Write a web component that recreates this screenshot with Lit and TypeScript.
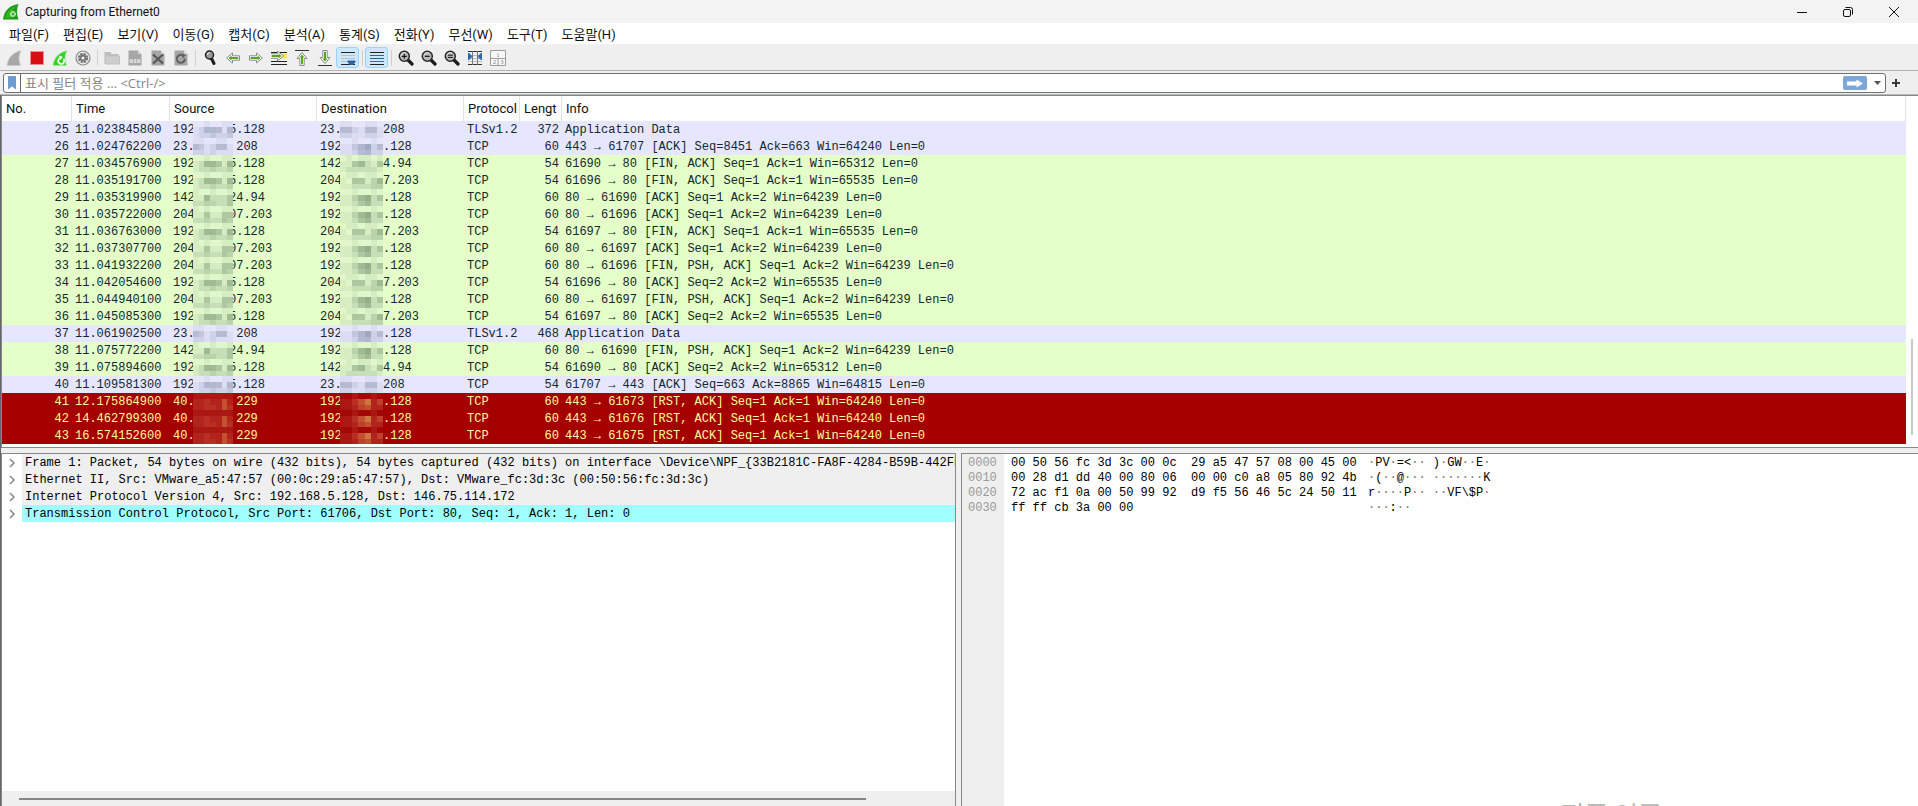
import { LitElement, html, css, svg, nothing } from "lit";
import { customElement } from "lit/decorators.js";

type Kind = "tls" | "web" | "rst";
interface Packet {
  no: number; time: string; src: [string, string]; dst: [string, string];
  proto: string; len: number; info: string; kind: Kind;
}

const VM: [string, string] = ["192", "5.128"];
const VM_D: [string, string] = ["192", ".128"];
const A: [string, string] = ["23.", " 208"];
const A_D: [string, string] = ["23.", "208"];
const B: [string, string] = ["142", "24.94"];
const B_D: [string, string] = ["142", "4.94"];
const C: [string, string] = ["204", "07.203"];
const C_D: [string, string] = ["204", "7.203"];
const R: [string, string] = ["40.", " 229"];

const p = (no: number, time: string, src: [string, string], dst: [string, string], proto: string, len: number, info: string, kind: Kind): Packet =>
  ({ no, time, src, dst, proto, len, info, kind });

const PACKETS: Packet[] = [
  p(25, "11.023845800", VM, A_D, "TLSv1.2", 372, "Application Data", "tls"),
  p(26, "11.024762200", A, VM_D, "TCP", 60, "443 → 61707 [ACK] Seq=8451 Ack=663 Win=64240 Len=0", "tls"),
  p(27, "11.034576900", VM, B_D, "TCP", 54, "61690 → 80 [FIN, ACK] Seq=1 Ack=1 Win=65312 Len=0", "web"),
  p(28, "11.035191700", VM, C_D, "TCP", 54, "61696 → 80 [FIN, ACK] Seq=1 Ack=1 Win=65535 Len=0", "web"),
  p(29, "11.035319900", B, VM_D, "TCP", 60, "80 → 61690 [ACK] Seq=1 Ack=2 Win=64239 Len=0", "web"),
  p(30, "11.035722000", C, VM_D, "TCP", 60, "80 → 61696 [ACK] Seq=1 Ack=2 Win=64239 Len=0", "web"),
  p(31, "11.036763000", VM, C_D, "TCP", 54, "61697 → 80 [FIN, ACK] Seq=1 Ack=1 Win=65535 Len=0", "web"),
  p(32, "11.037307700", C, VM_D, "TCP", 60, "80 → 61697 [ACK] Seq=1 Ack=2 Win=64239 Len=0", "web"),
  p(33, "11.041932200", C, VM_D, "TCP", 60, "80 → 61696 [FIN, PSH, ACK] Seq=1 Ack=2 Win=64239 Len=0", "web"),
  p(34, "11.042054600", VM, C_D, "TCP", 54, "61696 → 80 [ACK] Seq=2 Ack=2 Win=65535 Len=0", "web"),
  p(35, "11.044940100", C, VM_D, "TCP", 60, "80 → 61697 [FIN, PSH, ACK] Seq=1 Ack=2 Win=64239 Len=0", "web"),
  p(36, "11.045085300", VM, C_D, "TCP", 54, "61697 → 80 [ACK] Seq=2 Ack=2 Win=65535 Len=0", "web"),
  p(37, "11.061902500", A, VM_D, "TLSv1.2", 468, "Application Data", "tls"),
  p(38, "11.075772200", B, VM_D, "TCP", 60, "80 → 61690 [FIN, PSH, ACK] Seq=1 Ack=2 Win=64239 Len=0", "web"),
  p(39, "11.075894600", VM, B_D, "TCP", 54, "61690 → 80 [ACK] Seq=2 Ack=2 Win=65312 Len=0", "web"),
  p(40, "11.109581300", VM, A_D, "TCP", 54, "61707 → 443 [ACK] Seq=663 Ack=8865 Win=64815 Len=0", "tls"),
  p(41, "12.175864900", R, VM_D, "TCP", 60, "443 → 61673 [RST, ACK] Seq=1 Ack=1 Win=64240 Len=0", "rst"),
  p(42, "14.462799300", R, VM_D, "TCP", 60, "443 → 61676 [RST, ACK] Seq=1 Ack=1 Win=64240 Len=0", "rst"),
  p(43, "16.574152600", R, VM_D, "TCP", 60, "443 → 61675 [RST, ACK] Seq=1 Ack=1 Win=64240 Len=0", "rst"),
];

/* Shades (0-9) of the redaction blocks, three bands of seven cells per row. */
const MASKS: Record<string, string[]> = {
  "192": ["0010011", "1255415", "1223223"],
  "23.": ["1100110", "4312441", "2212111"],
  "142": ["1001001", "1152224", "2233224"],
  "204": ["1010011", "1141144", "2232243"],
  "40.": ["1111111", "2232252", "2233253"],
  d192: ["0010010", "1135624", "1124522"],
  "d23.": ["1100110", "4421441", "2211221"],
  d142: ["0101101", "1145214", "1222221"],
  d204: ["0110110", "1044135", "1122233"],
};
const PALETTE: Record<Kind, string[]> = {
  tls: ["#e6e6fb", "#dcdcf2", "#cfd1e8", "#c4c6de", "#b7bbd2", "#b0b8d0", "#a2a9bf", "#969db2", "#8990a6", "#7e879d"],
  web: ["#e0f6cb", "#d5edc0", "#c7dfb6", "#bad3aa", "#adc7a0", "#9fbb95", "#92ae8b", "#85a282", "#7b9779", "#6f8c70"],
  rst: ["#a30806", "#ab1712", "#b0241b", "#b93022", "#bd412c", "#c44f31", "#ce7640", "#c9653a", "#d08549", "#d59b59"],
};

const mosaic = (key: string, kind: Kind, width: number) => html`<svg class="mosaic" width=${width} height="17" viewBox="0 0 42 17" preserveAspectRatio="none" shape-rendering="crispEdges" aria-hidden="true">
  ${MASKS[key].flatMap((row, y) => [...row].map((c, x) => svg`<rect x=${x * 6} y=${y * 6} width="6" height="6" fill=${PALETTE[kind][+c]}></rect>`))}
</svg>`;

const icon = (body: unknown) => html`<svg width="16" height="16" viewBox="0 0 16 16" aria-hidden="true">${body}</svg>`;
const FIN = "M1 15.5C2 8 6.500 2.500 15 .8C12.500 5 12.500 10.500 14.500 15.500Z";
const DOC = svg`<path d="M1.500.5h9.500l3.500 3.500v11.500h-13z" fill="#a6a6a6"/><path d="M11 .5V4h3.500z" fill="#d8d8d8"/>`;
const ARROW = (t: string) => svg`<g transform=${t}><path d="M1.500 8 7.500 3v2.800h7v4.400h-7V13z" fill="#fff" stroke="#8a8a8a" stroke-width="1" stroke-linejoin="round"/><path d="M3.500 8 6.500 5.500v1.500h6.800v2H6.500v1.500z" fill="#56a818"/></g>`;
const LENS = (sign: unknown) => svg`<path d="M9.500 9.500 14 14" stroke="#1c1c1c" stroke-width="3.200" stroke-linecap="round"/><circle cx="6.300" cy="6.300" r="5" fill="#b9b9b9" stroke="#262626" stroke-width="1.500"/><path d="M3 5.500a3.500 3.500 0 0 1 5-2.500" stroke="#e8e8e8" fill="none"/>${sign}`;

const ICONS: Record<string, unknown> = {
  start: icon(svg`<path d=${FIN} fill="#a8a8a8" stroke="#c9c9c9" stroke-width=".8"/>`),
  stop: icon(svg`<rect x="1.500" y="1.500" width="13" height="13" fill="#d90d12" stroke="#ee8e90"/>`),
  restart: icon(svg`<path d=${FIN} fill="#35d029" stroke="#9bea92" stroke-width=".8"/><path d="M7.500 8.500a3 3 0 1 0 4 .5" fill="none" stroke="#fff" stroke-width="1.700"/><path d="M7 5.500 10.800 7 8 10z" fill="#fff"/>`),
  options: icon(svg`<circle cx="8" cy="8" r="7" fill="#e8e8e8" stroke="#8b8b8b" stroke-width="1.200"/><circle cx="8" cy="8" r="4.200" fill="none" stroke="#6b6b6b" stroke-width="1.800" stroke-dasharray="2.200 1.100"/><circle cx="8" cy="8" r="3.400" fill="#777"/><circle cx="8" cy="8" r="1.500" fill="#efefef"/>`),
  open: icon(svg`<path d="M.5 2h6l1 2h7v10H.5z" fill="#bdbdbd"/><path d="M1.500 6h14v8h-14z" fill="#cdcdcd" stroke="#c2c2c2"/>`),
  save: icon(svg`${DOC}<text x="8" y="13" font-family="Liberation Mono" font-size="6" font-weight="700" text-anchor="middle" fill="#f4f4f4">010</text>`),
  close: icon(svg`${DOC}<path d="M3 4.500 13 13.500M13 4.500 3 13.500" stroke="#575757" stroke-width="2.200"/>`),
  reload: icon(svg`${DOC}<path d="M11.800 8.500A4 4 0 1 1 10 5.500" fill="none" stroke="#5f5f5f" stroke-width="2"/><path d="M9 3.500 13 5l-3.500 3.500z" fill="#5f5f5f"/>`),
  find: icon(svg`<path d="M9.500 8.500 12 13.500" stroke="#1a1a1a" stroke-width="3" stroke-linecap="round"/><circle cx="7.500" cy="5" r="4" fill="#9a9a9a" stroke="#222" stroke-width="1.500"/><path d="M5.500 5a2.500 2.500 0 0 1 2.500-2.500" stroke="#eee" fill="none"/>`),
  back: icon(ARROW("")),
  forward: icon(ARROW("rotate(180 8 8)")),
  goto: icon(svg`<path d="M0 2.500h16M8 6.500h8M0 11.500h16M0 14.500h16" stroke="#222"/><path d="M11 3.500h5v5h-5z" fill="#f7e64a"/><g transform="translate(0 -2)">${ARROW("rotate(180 7 8)")}</g>`),
  first: icon(svg`<path d="M1 .5h14" stroke="#333"/><g transform="translate(0 1)">${ARROW("rotate(90 8 8)")}</g>`),
  last: icon(svg`<path d="M1 15.500h14" stroke="#333"/><g transform="translate(0 -1)">${ARROW("rotate(-90 8 8)")}</g>`),
  autoscroll: icon(svg`<path d="M1 2.500h14M1 14.500h14" stroke="#222"/><path d="M1 5.500h14M1 8.500h14M1 11.500h9" stroke="#bcc0b8"/><path d="M7.500 10.500h8v1.500l-2.500 3h-3l-2.500-3z" fill="#2f62a5"/>`),
  colorize: icon(svg`<path d="M1 2.500h14" stroke="#222"/><path d="M1 5.500h14" stroke="#e02020"/><path d="M1 8.500h14" stroke="#33558f"/><path d="M1 11.500h14" stroke="#76508c"/><path d="M1 14.500h14" stroke="#222"/>`),
  zoomIn: icon(LENS(svg`<path d="M3.800 6.300h5M6.300 3.800v5" stroke="#111" stroke-width="1.200"/>`)),
  zoomOut: icon(LENS(svg`<path d="M3.800 6.300h5" stroke="#111" stroke-width="1.200"/>`)),
  zoomReset: icon(LENS(svg`<path d="M3.800 5.200h5M3.800 7.400h5" stroke="#111"/>`)),
  resize: icon(svg`<path d="M1 1.500h14M1 14.500h14" stroke="#333"/><path d="M1 5.500h14M1 8.500h14M1 11.500h14" stroke="#c0c0b8"/><path d="M5.500 1v14M10.500 1v14" stroke="#777"/><path d="M1.500 3v7L5 6.500zM14.500 3v7L11 6.500z" fill="#2f67ad" stroke="#2f67ad"/>`),
  layout: icon(svg`<path d="M.5.5h15v15H.5zM.5 8.500h15M8 8.500v7" fill="#f7f7f7" stroke="#9b9b9b"/><g font-family="Liberation Serif" font-size="6" text-anchor="middle" fill="#777"><text x="8" y="6.500">1</text><text x="4.500" y="14">2</text><text x="12" y="14">3</text></g>`),
};

const TOOLS: Array<[string, string] | null> = [
  ["start", "캡처 시작"], ["stop", "캡처 중지"], ["restart", "캡처 다시 시작"], ["options", "캡처 옵션"], null,
  ["open", "열기"], ["save", "저장"], ["close", "닫기"], ["reload", "다시 읽기"], null,
  ["find", "패킷 찾기"], ["back", "이전 패킷"], ["forward", "다음 패킷"], ["goto", "패킷으로 이동"],
  ["first", "첫 패킷"], ["last", "마지막 패킷"], ["autoscroll", "자동 스크롤"], null,
  ["colorize", "패킷 색상"], null,
  ["zoomIn", "확대"], ["zoomOut", "축소"], ["zoomReset", "원래 크기"], ["resize", "열 크기 조정"], ["layout", "배치 초기화"],
];
const ACTIVE = new Set(["autoscroll", "colorize"]);
const DISABLED = new Set(["start", "open", "save", "close", "reload"]);
const MENUS = ["파일(F)", "편집(E)", "보기(V)", "이동(G)", "캡처(C)", "분석(A)", "통계(S)", "전화(Y)", "무선(W)", "도구(T)", "도움말(H)"];

const DETAILS = [
  "Frame 1: Packet, 54 bytes on wire (432 bits), 54 bytes captured (432 bits) on interface \\Device\\NPF_{33B2181C-FA8F-4284-B59B-442FE884",
  "Ethernet II, Src: VMware_a5:47:57 (00:0c:29:a5:47:57), Dst: VMware_fc:3d:3c (00:50:56:fc:3d:3c)",
  "Internet Protocol Version 4, Src: 192.168.5.128, Dst: 146.75.114.172",
  "Transmission Control Protocol, Src Port: 61706, Dst Port: 80, Seq: 1, Ack: 1, Len: 0",
];

const BYTES = [
  ["0000", "00 50 56 fc 3d 3c 00 0c  29 a5 47 57 08 00 45 00", "·PV·=<·· )·GW··E·"],
  ["0010", "00 28 d1 dd 40 00 80 06  00 00 c0 a8 05 80 92 4b", "·(··@··· ·······K"],
  ["0020", "72 ac f1 0a 00 50 99 92  d9 f5 56 46 5c 24 50 11", "r····P·· ··VF\\$P·"],
  ["0030", "ff ff cb 3a 00 00", "···:··"],
];

@customElement("title-menu")
class TitleMenu extends LitElement {
  static styles = css`
    :host { display: block; background: #fff; color: #111; font: 12px Roboto, sans-serif; }
    .title { display: flex; align-items: center; height: 23px; background: #f3f3f3; padding: 0 1px 0 3px; }
    .title span { flex: 1; padding-left: 6px; }
    .win { width: 46px; height: 23px; padding: 0; border: 0; background: none; display: flex; align-items: center; justify-content: center; }
    .menu { display: flex; height: 21px; padding-left: 2px; border-bottom: 1px solid #f0f0f0; }
    .menu button { border: 0; background: none; padding: 0 7px; font: 13px Roboto, "Noto Sans CJK KR", sans-serif; color: #111; }
  `;
  render() {
    return html`
      <header class="title">
        <svg width="16" height="18" viewBox="0 0 16 18" aria-hidden="true">
          <path d="M0 16.500C1 8 6 2.500 15.500 1C13.500 6 13.500 11 15.500 16.500Z" fill="#1f9c14"/>
          <path d="M2 15C4 8.500 8 4.500 13 2.800C10 6 9 9 9 15Z" fill="#31b522"/>
          <circle cx="10" cy="11" r="2.600" fill="#9ed897" stroke="#e6f7e4" stroke-width="1" stroke-dasharray="1.300 .8"/>
          <circle cx="10" cy="11" r="1" fill="#1f9c14"/>
        </svg>
        <span>Capturing from Ethernet0</span>
        <button class="win" aria-label="최소화"><svg width="12" height="12"><path d="M1 6.500h10" stroke="#111"/></svg></button>
        <button class="win" aria-label="이전 크기로"><svg width="12" height="12" fill="none" stroke="#111"><rect x="1.500" y="3.500" width="7" height="7" rx="1.500"/><path d="M3.500 1.500h5a2 2 0 0 1 2 2v5"/></svg></button>
        <button class="win" aria-label="닫기"><svg width="12" height="12"><path d="m1 1 10 10M11 1 1 11" stroke="#111"/></svg></button>
      </header>
      <nav class="menu">${MENUS.map((m) => html`<button>${m}</button>`)}</nav>`;
  }
}

@customElement("tool-bars")
class ToolBars extends LitElement {
  static styles = css`
    :host { display: block; background: #efefef; }
    .tools { display: flex; align-items: center; height: 25px; padding-left: 2px; border-bottom: 1px solid #b4b4b4; }
    .tool { box-sizing: border-box; width: 23px; height: 21px; padding: 0; border: 1px solid transparent; border-radius: 3px; background: none; display: flex; align-items: center; justify-content: center; }
    .on { background: #cce8ff; border-color: #99d1ff; }
    .sep { width: 1px; height: 16px; margin: 0 2px 0 3px; background: #cfcfcf; }
    .filter { display: flex; align-items: center; height: 20px; padding: 2px 0 1px 3px; border-bottom: 1px solid #b8b8b8; }
    .box { box-sizing: border-box; flex: 1; display: flex; align-items: center; height: 20px; background: #fff; border: 1px solid #707070; border-radius: 3px; }
    .icon { border: 0; background: none; padding: 0; display: flex; align-items: center; justify-content: center; }
    .mark { width: 17px; height: 18px; border-right: 1px solid #666; }
    .field { flex: 1; min-width: 0; border: 0; outline: 0; background: none; padding: 0 4px; font: 13px/18px "Open Sans", "Noto Sans CJK KR", sans-serif; }
    .field::placeholder { color: #858585; opacity: 1; }
    .apply { width: 24px; height: 14px; border-radius: 2px; background: #7ea6d6; }
    .more { width: 18px; height: 18px; padding-left: 3px; }
    .plus { width: 20px; height: 20px; margin-right: 12px; }
  `;
  render() {
    return html`
      <div class="tools" role="toolbar">
        ${TOOLS.map((t) => t
          ? html`<button class="tool ${ACTIVE.has(t[0]) ? "on" : ""}" aria-label=${t[1]} ?disabled=${DISABLED.has(t[0])}>${ICONS[t[0]]}</button>`
          : html`<span class="sep"></span>`)}
      </div>
      <div class="filter">
        <div class="box">
          <button class="icon mark" aria-label="책갈피"><svg width="10" height="14"><path d="M1 0h8v13.500L5 10.500 1 13.500z" fill="#6f9bd1"/></svg></button>
          <input class="field" aria-label="표시 필터" placeholder="표시 필터 적용 … <Ctrl-/>">
          <button class="icon apply" aria-label="적용"><svg width="16" height="9"><path d="M0 2.500h9.500V.5L16 4.500 9.500 8.500v-2H0z" fill="#fff"/></svg></button>
          <button class="icon more" aria-label="최근 필터"><svg width="7" height="4"><path d="M0 0h7L3.500 4z" fill="#555"/></svg></button>
        </div>
        <button class="icon plus" aria-label="필터 추가"><svg width="8" height="8"><path d="M4 0v8M0 4h8" stroke="#3c3c3c" stroke-width="2"/></svg></button>
      </div>`;
  }
}

@customElement("packet-list")
class PacketList extends LitElement {
  static styles = css`
    :host { display: flex; background: #fff; border: 1px solid #828790; border-right: 0; padding-bottom: 3px; }
    table { flex: 1; width: 0; table-layout: fixed; border-collapse: separate; border-spacing: 0; }
    th { height: 25px; padding: 0 0 0 4px; box-sizing: border-box; border-right: 1px solid #e2e2e2; font: 13px Roboto, sans-serif; line-height: 25px; color: #111; text-align: left; overflow: hidden; white-space: nowrap; }
    td { box-sizing: border-box; height: 17px; padding: 2px 3px 0; font: 12px/15px "Liberation Mono", monospace; white-space: pre; overflow: hidden; }
    .no { width: 70px; } .time { width: 98px; } .addr { width: 147px; } .proto { width: 56px; } .len { width: 42px; }
    .num { text-align: right; }
    .tls { background: #e6e6ff; color: #12272e; }
    .web { background: #e4ffc7; color: #12272e; }
    .rst { background: #a40000; color: #fffc9c; }
    .ip { display: flex; height: 17px; margin-top: -2px; line-height: 19px; }
    .pre { width: 20px; white-space: pre; }
    .mosaic { display: block; position: relative; flex: none; }
    .src .post { margin-left: -4px; }
    .rail { width: 12px; display: flex; flex-direction: column; justify-content: flex-end; align-items: center; padding-bottom: 9px; }
    .thumb { width: 2px; height: 96px; background: #c8c8c8; }
  `;
  render() {
    return html`
      <table>
        <thead><tr>
          <th class="no">No.</th><th class="time">Time</th><th class="addr">Source</th><th class="addr">Destination</th>
          <th class="proto">Protocol</th><th class="len">Lengt</th><th>Info</th>
        </tr></thead>
        <tbody>${PACKETS.map((k) => html`<tr class=${k.kind}>
          <td class="num">${k.no}</td><td>${k.time}</td>
          <td><div class="ip src"><span class="pre">${k.src[0]}</span>${mosaic(k.src[0], k.kind, 40)}<span class="post">${k.src[1]}</span></div></td>
          <td><div class="ip"><span class="pre">${k.dst[0]}</span>${mosaic("d" + k.dst[0], k.kind, 43)}<span>${k.dst[1]}</span></div></td>
          <td>${k.proto}</td><td class="num">${k.len}</td><td>${k.info}</td></tr>`)}</tbody>
      </table>
      <div class="rail"><div class="thumb"></div></div>`;
  }
}

@customElement("packet-details")
class PacketDetails extends LitElement {
  static styles = css`
    :host { display: flex; flex-direction: column; min-width: 0; overflow: hidden; box-sizing: border-box; background: #fff; border: 1px solid #828790; border-bottom: 0; }
    ul { flex: 1; list-style: none; margin: 0; padding: 0; }
    li { display: flex; height: 17px; font: 12px/19px "Liberation Mono", monospace; color: #000; white-space: pre; }
    .open { width: 20px; flex: none; padding: 0; border: 0; background: none; display: flex; align-items: center; justify-content: center; }
    .text { flex: 1; min-width: 0; overflow: hidden; padding-left: 3px; background: #efefef; }
    li:last-child .text { background: #a0ffff; }
    .rail { height: 15px; background: #efefef; display: flex; align-items: center; padding: 0 89px 0 17px; }
    .thumb { flex: 1; height: 2px; background: #858585; }
  `;
  render() {
    return html`
      <ul>${DETAILS.map((d) => html`<li><button class="open" aria-label="펼치기"><svg width="6" height="10"><path d="m1 1 4 4-4 4" fill="none" stroke="#858585" stroke-width="1.500"/></svg></button><span class="text">${d}</span></li>`)}</ul>
      <div class="rail"><div class="thumb"></div></div>`;
  }
}

@customElement("packet-bytes")
class PacketBytes extends LitElement {
  static styles = css`
    :host { display: flex; flex-direction: column; min-width: 0; overflow: hidden; box-sizing: border-box; border: 1px solid #828790; border-right: 0; border-bottom: 0; background: linear-gradient(to right, #efefef 42px, #fff 42px); padding-top: 2px; }
    .row { display: grid; grid-template-columns: 43px 357px auto; padding-left: 6px; height: 15px; font: 12px/15px "Liberation Mono", monospace; color: #000; white-space: pre; }
    .offset { color: #999; }
    .dot { color: #777; }
  `;
  render() {
    return BYTES.map(([o, h, a]) => html`<div class="row"><span class="offset">${o}</span><span>${h}</span><span>${a
      .split(/(·+)/).map((s) => (s ? (s[0] === "·" ? html`<span class="dot">${s}</span>` : s) : nothing))}</span></div>`);
  }
}

@customElement("app-root")
class AppRoot extends LitElement {
  static styles = css`
    :host { display: flex; flex-direction: column; position: relative; height: 100vh; overflow: hidden; background: #efefef; box-sizing: border-box; }
    .work { flex: 1; min-height: 0; display: flex; flex-direction: column; border-left: 1px solid #666; }
    .panes { flex: 1; min-height: 0; margin-top: 5px; display: grid; grid-template-columns: 955fr 957fr; column-gap: 5px; }
    .mark { position: absolute; right: 256px; bottom: -23px; font: 26px/30px "Noto Sans CJK KR", sans-serif; color: #b8b8b8; }
  `;
  render() {
    return html`
      <title-menu></title-menu>
      <tool-bars></tool-bars>
      <main class="work">
        <packet-list></packet-list>
        <div class="panes"><packet-details></packet-details><packet-bytes></packet-bytes></div>
      </main>
      <div class="mark">정품 인증</div>`;
  }
}
